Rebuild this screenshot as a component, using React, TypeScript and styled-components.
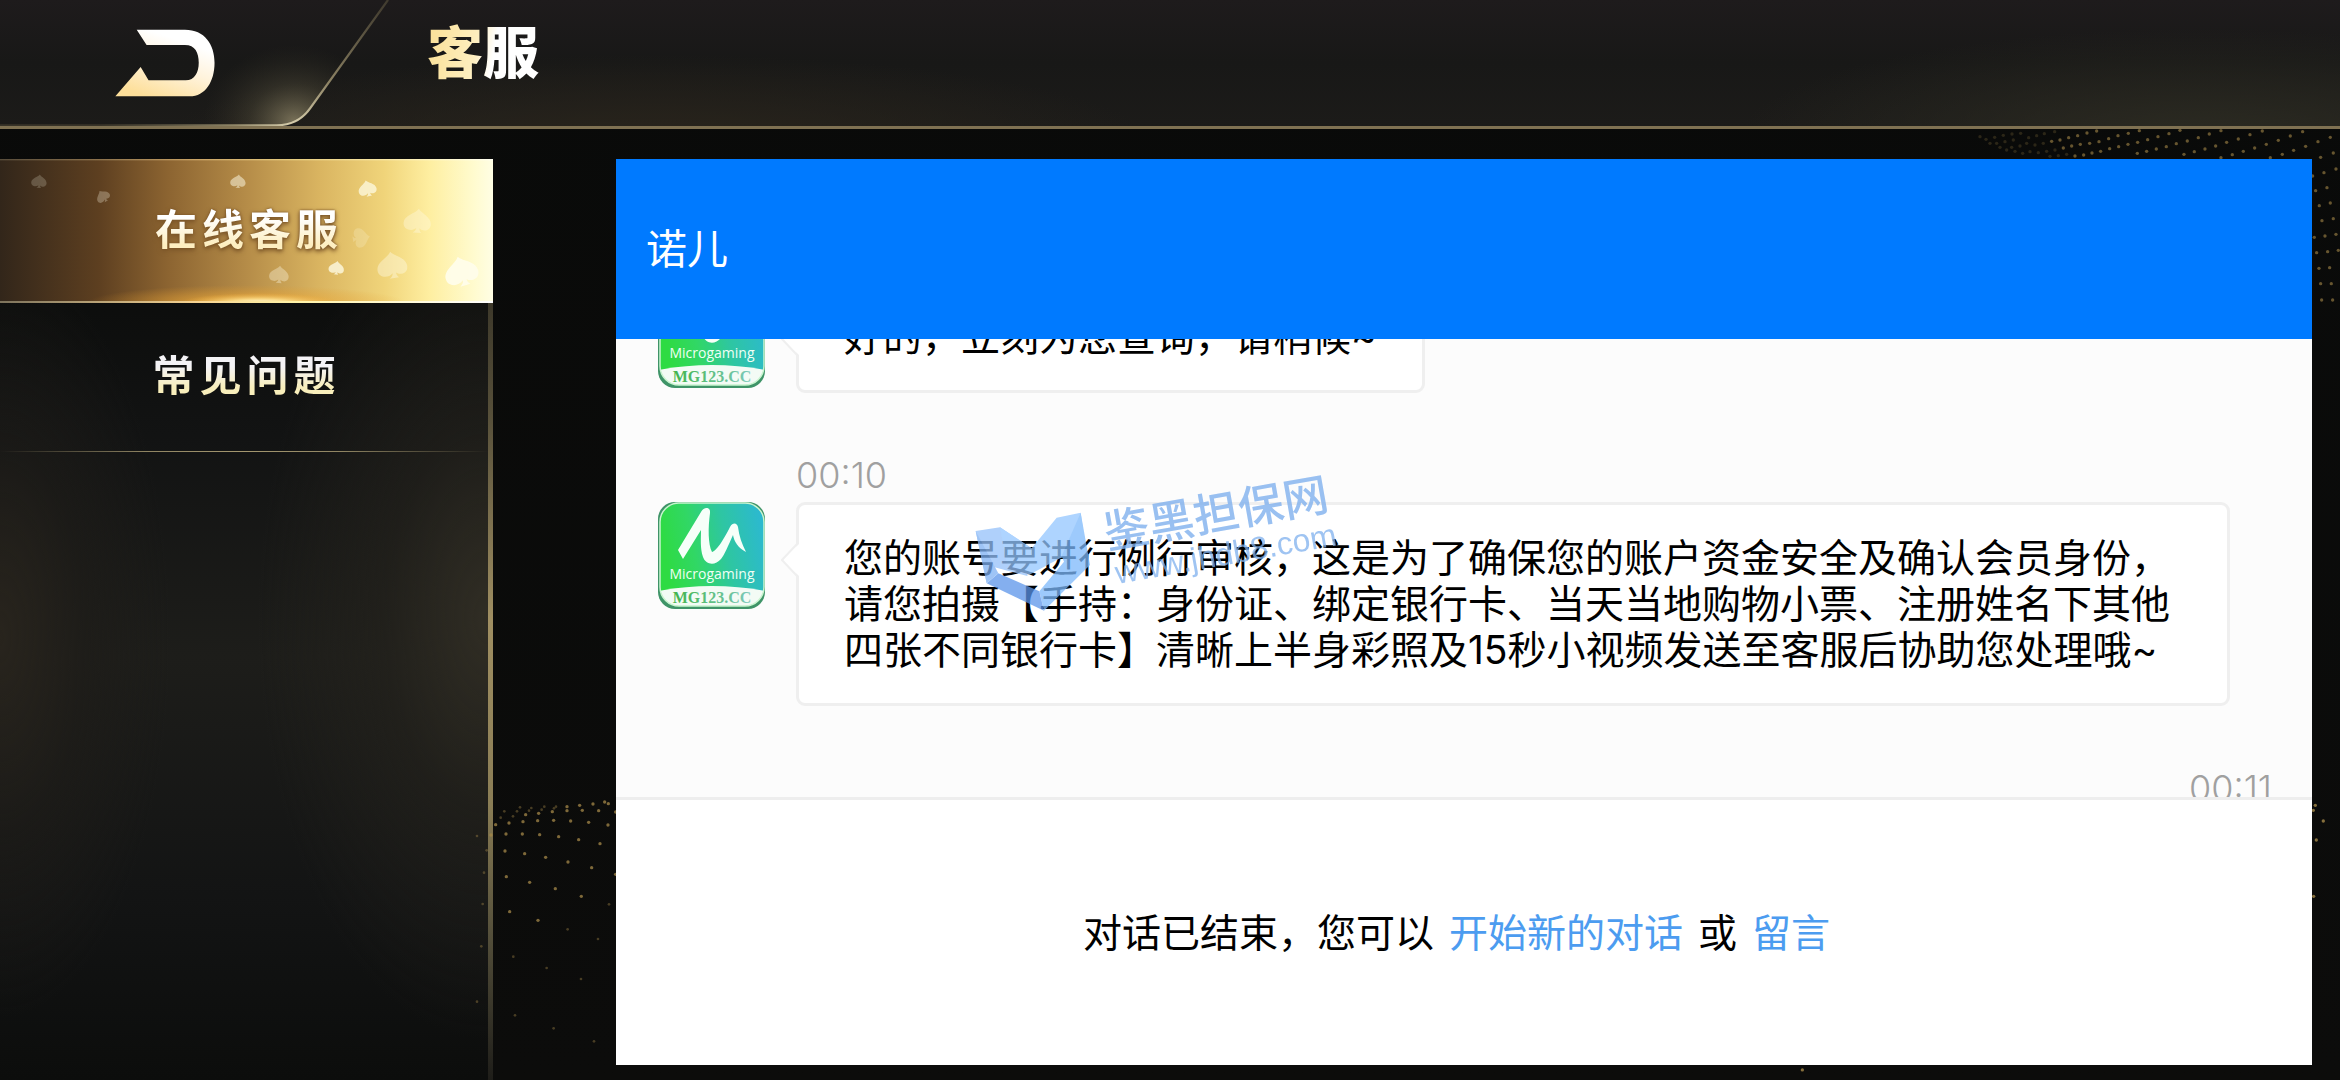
import React, { useLayoutEffect, useRef } from "react";
import styled, { createGlobalStyle } from "styled-components";

const UI_FONT = `Inter, "Noto Sans CJK SC", sans-serif`;
const CJK_FONT = `"Noto Sans CJK SC", sans-serif`;

const GlobalStyle = createGlobalStyle`
  * { box-sizing: border-box; }
  body { margin: 0; background: #0b0c0b; font-family: ${UI_FONT}; }
  button { border: 0; padding: 0; background: none; font: inherit; cursor: pointer; }
  p, h1, h2 { margin: 0; font-weight: 400; }
`;

const Page = styled.div`
  position: relative;
  display: flex;
  flex-direction: column;
  height: 100vh;
  overflow: hidden;
  background: linear-gradient(#090a09, #0c0c0b);
`;

const TopBar = styled.header`
  position: relative;
  z-index: 2;
  display: flex;
  align-items: flex-start;
  border-bottom: 3px solid #7f7152;
  background:
    radial-gradient(ellipse 460px 110px at 94% 110%, #2c2b22, transparent),
    radial-gradient(ellipse 500px 90px at 28% 115%, #2a251c, transparent),
    linear-gradient(#1e1b1c, #181817 50%, #1c1b19);
`;

const BackButton = styled.button`
  display: block;
  line-height: 0;
`;

const Title = styled.h1`
  margin-left: 24px;
  padding-top: 14px;
  font-family: ${CJK_FONT};
  font-size: 56px;
  line-height: 70px;
  font-weight: 900;
  color: transparent;
  background: linear-gradient(100deg, #fbe29c 10%, #fdeebf 45%, #ffffff 60%);
  background-clip: text;
  -webkit-background-clip: text;
`;

const Body = styled.div`
  display: flex;
  flex: 1;
  min-height: 0;
  padding-top: 30px;
`;

const Sidebar = styled.nav`
  display: flex;
  flex-direction: column;
  width: 493px;
  flex: none;
  border-right: 5px solid;
  border-image: linear-gradient(#1c1b16, #57503a 28%, #a08f62 50%, #8a7d55 70%, #55503b 84%, #1e1d19) 1;
  background:
    radial-gradient(ellipse 230px 420px at 100% 50%, #302d24, #25231d99 45%, transparent),
    radial-gradient(ellipse 170px 380px at 0 52%, #28241d, #1f1d1999 50%, transparent),
    linear-gradient(#0c0d0c 14%, #121313 30%, #1d1d1a 54%, #131414 80%, #0c0d0c);
`;

const SideItem = styled.button<{ $active?: boolean }>`
  position: relative;
  height: ${(p) => (p.$active ? "144px" : "149px")};
  padding-bottom: 8px;
  margin-right: ${(p) => (p.$active ? "-5px" : "0")};
  border-bottom: ${(p) => (p.$active ? "0" : "1px solid")};
  border-image: linear-gradient(90deg, transparent, #8f8462 30%, #a4976f 50%, #8f8462 70%, transparent) 1;
  background: ${(p) =>
    p.$active
      ? "linear-gradient(90deg, #32261a, #5d3f20 20%, #8c6431 34%, #b58c48 50%, #dab561 65%, #f0d47a 78%, #feeea0 87%, #fffbce 96%, #fffee4)"
      : "none"};
`;

const SideLabel = styled.span<{ $active?: boolean }>`
  position: relative;
  font-family: ${CJK_FONT};
  font-size: 42px;
  line-height: 60px;
  font-weight: 700;
  letter-spacing: 5px;
  padding-left: 5px;
  color: transparent;
  background: ${(p) =>
    p.$active
      ? "linear-gradient(#ffffff 35%, #fdeec0 80%)"
      : "linear-gradient(#f4f3f6 40%, #f8eebb 75%)"};
  background-clip: text;
  -webkit-background-clip: text;
  filter: ${(p) =>
    p.$active
      ? "drop-shadow(0 0 1px #7b5528) drop-shadow(0 2px 2px #7b5528)"
      : "none"};
`;

const SideArt = styled.svg`
  position: absolute;
  inset: 0;
  width: 100%;
  height: 100%;
`;

const Backdrop = styled.svg`
  position: absolute;
  inset: 0;
  width: 100%;
  height: 100%;
  pointer-events: none;
`;

const Panel = styled.main`
  position: relative;
  z-index: 2;
  display: flex;
  flex-direction: column;
  flex: 1;
  min-width: 0;
  margin: 0 28px 15px 123px;
  background: #fff;
`;

const PanelHeader = styled.h2`
  padding: 60px 30px;
  font-size: 41px;
  line-height: 60px;
  color: #fff;
  background: #007aff;
`;

const Chat = styled.section`
  flex: 1;
  min-height: 0;
  overflow-y: auto;
  scrollbar-width: none;
  padding: 30px 40px 60px 42px;
  background: #fcfcfc;
`;

const Message = styled.article`
  display: grid;
  grid-template-columns: 108px minmax(0, 1fr);
  column-gap: 30px;
  row-gap: 4px;
  padding-right: 42px;
  margin-bottom: 59px;
`;

const Time = styled.time<{ $own?: boolean }>`
  display: block;
  grid-column: 2;
  font-size: 36px;
  line-height: 46px;
  font-weight: 300;
  color: #a0a0a0;
  text-align: ${(p) => (p.$own ? "right" : "left")};
`;

const Bubble = styled.div`
  position: relative;
  justify-self: start;
  padding: 30px 45px;
  border: 3px solid #efefef;
  border-radius: 9px;
  font-size: 39px;
  line-height: 46px;
  color: #000;
  background: #fff;
`;

const Tail = styled.svg`
  position: absolute;
  left: -18px;
  top: 38px;
`;

const Footer = styled.footer`
  padding: 110px 20px 109px;
  border-top: 3px solid #eee;
  font-size: 39px;
  line-height: 46px;
  text-align: center;
  color: #000;
`;

const FooterLink = styled.a`
  margin: 0 15px;
  color: #4c9cf0;
  text-decoration: none;
`;

const Watermark = styled.svg`
  position: absolute;
  left: 354px;
  top: 311px;
  pointer-events: none;
`;

function BackArt() {
  return (
    <svg width="403" height="126" viewBox="0 0 1020 378" preserveAspectRatio="none" aria-hidden="true">
      <defs>
        <linearGradient id="arrow" x1="0.2" y1="1" x2="0.7" y2="0">
          <stop offset="0.05" stopColor="#fddf9a" />
          <stop offset="0.5" stopColor="#fff3dc" />
          <stop offset="0.85" stopColor="#ffffff" />
        </linearGradient>
        <radialGradient id="tabGlow" gradientUnits="userSpaceOnUse" cx="745" cy="365" r="230">
          <stop offset="0" stopColor="#8f8668" stopOpacity="0.8" />
          <stop offset="0.5" stopColor="#5a543f" stopOpacity="0.35" />
          <stop offset="1" stopColor="#3a3528" stopOpacity="0" />
        </radialGradient>
        <radialGradient id="tabLine" gradientUnits="userSpaceOnUse" cx="735" cy="360" r="480">
          <stop offset="0" stopColor="#d8cfae" />
          <stop offset="0.3" stopColor="#8f8566" />
          <stop offset="1" stopColor="#4a4332" stopOpacity="0.6" />
        </radialGradient>
      </defs>
      <path d="M0 0H982L785 325Q755 376 700 376H0Z" fill="url(#tabGlow)" />
      <path d="M0 376H700Q755 376 785 325L982 0" fill="none" stroke="url(#tabLine)" strokeWidth="6" />
      <path
        d="M346 89H468C518 89 543 133 543 188C543 244 520 289 480 289H292L356 201L376 241H470C493 241 503 216 503 188C503 158 494 135 468 135H371Z"
        fill="url(#arrow)"
      />
    </svg>
  );
}

/* x, y, half width, tilt, opacity */
const SPADES: number[][] = [
  [117, 68, 22, 4, 0.2],
  [309, 113, 20, -35, 0.28],
  [714, 68, 22, 4, 0.5],
  [1102, 90, 26, -14, 0.7],
  [1252, 188, 39, 4, 0.35],
  [1082, 236, 28, 80, 0.2],
  [837, 348, 28, 4, 0.35],
  [1009, 328, 22, 6, 0.75],
  [1176, 321, 43, -10, 0.4],
  [1384, 340, 48, -16, 0.95],
];

function ActiveArt() {
  return (
    <SideArt viewBox="0 0 1479 432" preserveAspectRatio="none" aria-hidden="true">
      <defs>
        <radialGradient id="flare">
          <stop offset="0" stopColor="#fffdf0" />
          <stop offset="0.4" stopColor="#ffe596" stopOpacity="0.8" />
          <stop offset="1" stopColor="#f2ad3a" stopOpacity="0" />
        </radialGradient>
        <radialGradient id="warm">
          <stop offset="0" stopColor="#f0b040" stopOpacity="0.9" />
          <stop offset="1" stopColor="#e39b2c" stopOpacity="0" />
        </radialGradient>
        <linearGradient id="edge">
          <stop offset="0" stopColor="#7d735c" />
          <stop offset="0.4" stopColor="#f7d492" />
          <stop offset="0.6" stopColor="#fff3a8" />
          <stop offset="1" stopColor="#ffffff" />
        </linearGradient>
      </defs>
      <ellipse cx="740" cy="432" rx="480" ry="54" fill="url(#warm)" />
      <ellipse cx="780" cy="432" rx="240" ry="30" fill="url(#flare)" />
      <rect y="426" width="1479" height="6" fill="url(#edge)" />
      <rect width="1479" height="4" fill="url(#edge)" opacity="0.5" />
      {SPADES.map(([x, y, r, tilt, opacity]) => (
        <path
          key={`${x}-${y}`}
          transform={`translate(${x} ${y}) rotate(${tilt}) scale(${r / 20})`}
          d="M1 -20C5 -13 21 -9 21 3C21 14 9 15 4 10C4 13 5 15 7 17H-6C-3 15 -1 13 -1 10C-7 16 -21 14 -21 3C-21 -9 -4 -12 1 -20Z"
          fill="#fffdea"
          opacity={opacity}
        />
      ))}
    </SideArt>
  );
}

const DOTS_TOP = [
  [718,122],[743,149],[774,140],[807,131],[840,121],[829,161],[862,153],[895,143],[928,132],[963,122],
  [852,193],[883,185],[915,177],[947,168],[980,157],[1015,147],[1050,134],[1087,123],[963,203],[997,194],
  [1030,184],[1064,174],[1099,163],[1135,151],[1171,138],[1208,125],[1111,203],[1147,193],[1181,181],
  [1217,169],[1254,155],[1291,142],[1262,202],[1300,189],[685,130],[654,137],[626,146],[597,155],[569,160],
  [684,163],[713,157],[656,170],[629,176],[602,184],[576,189],[740,184],[712,190],[769,177],[799,170],
  [590,123],[561,129],[533,137],[506,143],[480,150],[455,154],[541,163],[515,168],[490,174],[551,195],[525,198],
  [1238,258],[1272,248],[1308,237],[1247,302],[1281,293],[1258,347],[1291,339],[1266,392],[1300,386],
  [1243,442],[1275,438],[1308,433],[1250,488],[1283,485],[1315,481],[1257,535],[1289,533],[1262,581],
  [1294,581],[1265,630],[1298,630],
];
const DOTS_FAINT = [
  [464,125],[433,131],[410,137],[386,143],[362,130],[336,132],[310,136],[284,142],[258,148],[340,150],
  [315,155],[290,160],[430,160],[405,165],[380,160],[360,168],[335,172],[465,180],[440,184],[415,188],
  [390,185],[368,190],[345,184],[500,193],[475,197],[450,199],[320,180],[300,172],[240,140],[270,160],
];
const DOTS_LEFT = [
  [167,194],[207,189],[249,185],[293,182],[341,181],[392,183],[446,187],[504,195],[198,222],[247,222],
  [299,224],[356,230],[416,239],[480,251],[195,273],[254,281],[317,292],[384,306],[455,323],[199,350],
  [269,367],[346,386],[424,409],[209,455],[294,481],[257,164],[296,160],[337,155],[381,152],[427,151],
  [476,152],[527,156],[381,140],[419,136],[459,132],[505,131],[494,126],[153,225],[527,343],
];
const DOTS_LEFT_FAINT = [
  [507,433],[383,508],[474,537],[220,590],[320,624],[423,657],[225,766],[341,805],[462,844],[132,338],
  [128,432],[124,559],[111,725],[140,271],[193,154],[182,173],[219,169],[231,154],[240,142],[267,152],
  [274,144],[305,149],[313,140],[342,145],[348,140],[111,228],
];
const DOTS_BOTTOM = [[646,496],[640,511],[670,543],[649,600],[641,769],[-893,1290]];

function Dots({ at, x, y, r, opacity }: { at: number[][]; x: number; y: number; r: number; opacity: number }) {
  return (
    <g transform={`translate(${x} ${y}) scale(0.3333)`} opacity={opacity}>
      {at.map(([cx, cy]) => (
        <circle key={`${cx}-${cy}`} cx={cx} cy={cy} r={r} />
      ))}
    </g>
  );
}

function BackdropArt() {
  return (
    <Backdrop viewBox="0 0 2340 1080" preserveAspectRatio="xMidYMid slice" fill="#a58849" aria-hidden="true">
      <Dots at={DOTS_TOP} x={1900} y={90} r={5} opacity={0.6} />
      <Dots at={DOTS_FAINT} x={1900} y={90} r={5} opacity={0.22} />
      <Dots at={DOTS_LEFT} x={440} y={760} r={5} opacity={0.75} />
      <Dots at={DOTS_LEFT_FAINT} x={440} y={760} r={4} opacity={0.4} />
      <Dots at={DOTS_BOTTOM} x={2100} y={640} r={5} opacity={0.8} />
    </Backdrop>
  );
}

function Avatar({ id }: { id: string }) {
  return (
    <svg width="108" height="108" viewBox="0 0 108 108" role="img" aria-label="Microgaming">
      <defs>
        <linearGradient id={`${id}-fill`} x1="0" y1="0.6" x2="1" y2="0.4">
          <stop offset="0.08" stopColor="#2edb43" />
          <stop offset="0.35" stopColor="#31d765" />
          <stop offset="0.65" stopColor="#2ec6a2" />
          <stop offset="1" stopColor="#2cb9cf" />
        </linearGradient>
        <linearGradient id={`${id}-ink`}>
          <stop offset="0" stopColor="#42b44c" />
          <stop offset="1" stopColor="#7cc9bb" />
        </linearGradient>
        <clipPath id={`${id}-clip`}>
          <rect x="2" y="1" width="104" height="103" rx="19" />
        </clipPath>
      </defs>
      <rect width="107" height="107" rx="17" fill="#3f9468" />
      <g clipPath={`url(#${id}-clip)`}>
        <rect width="108" height="108" fill={`url(#${id}-fill)`} />
        <path d="M0 89Q54 79 108 89V108H0Z" fill="#f3fbf5" />
      </g>
      <rect x="2" y="1" width="104" height="103" rx="19" fill="none" stroke="#c9f5cf" strokeWidth="1.5" />
      <path
        d="M20 48L43 10C46 4 53 5 52 11C50 26 50 42 54 50C59 49 67 35 72 25C75 20 79 21 80 25C81 34 84 42 88 50C80 46 76 39 75 33C70 44 67 52 63 57C57 64 48 63 45 55C42 46 43 37 43 28L25 57Z"
        fill="#f6fff9"
      />
      <text x="54" y="77" textAnchor="middle" fontFamily="Open Sans, sans-serif" fontSize="14" fill="#effff4">
        Microgaming
      </text>
      <text
        x="54"
        y="101"
        textAnchor="middle"
        fontFamily="Liberation Serif, serif"
        fontWeight="700"
        fontSize="16"
        fill={`url(#${id}-ink)`}
      >
        MG123.CC
      </text>
    </svg>
  );
}

function ChatMessage({ id, time, children }: { id: string; time?: string; children: React.ReactNode }) {
  return (
    <Message>
      {time && <Time>{time}</Time>}
      <Avatar id={id} />
      <Bubble>
        <Tail width="18" height="34" viewBox="0 0 18 34" aria-hidden="true">
          <path d="M18 1L1 17L18 33" fill="#fff" />
          <path d="M16 1L1 17L16 33" fill="none" stroke="#efefef" strokeWidth="2" />
        </Tail>
        <p>{children}</p>
      </Bubble>
    </Message>
  );
}

function WatermarkArt() {
  return (
    <Watermark width="370" height="150" viewBox="90 60 1110 450" aria-hidden="true">
      <g opacity="0.75">
        <path d="M107 243L180 232L275 295L262 378L158 350L140 400Z" fill="#94c1fa" />
        <path d="M180 232L275 295L350 203L422 188L438 300L360 325L268 374L200 340Z" fill="#93c6ff" />
        <path d="M422 188L450 345L312 482L298 424L372 335L365 318Z" fill="#7db9fb" />
        <path d="M140 400L175 370L298 424L312 482Z" fill="#5b95ea" />
        <path d="M107 243L175 370L140 400Z" fill="#7eb0f3" />
      </g>
      <text
        transform="translate(502 297) rotate(-10)"
        fontFamily="Noto Sans CJK SC, sans-serif"
        fontWeight="500"
        fontSize="136"
        fill="#7fb0ee"
        fillOpacity="0.8"
      >
        鉴黑担保网
      </text>
      <text
        transform="translate(532 402) rotate(-10)"
        fontFamily="Liberation Sans, sans-serif"
        fontSize="96"
        fill="#7fb0ee"
        fillOpacity="0.75"
      >
        www.jhdb8.com
      </text>
    </Watermark>
  );
}

/* Distance the conversation is scrolled when it opens. */
const INITIAL_SCROLL = 88;

export default function App() {
  const chat = useRef<HTMLElement>(null);

  useLayoutEffect(() => {
    if (chat.current) chat.current.scrollTop = INITIAL_SCROLL;
  }, []);

  return (
    <Page>
      <GlobalStyle />
      <TopBar>
        <BackButton type="button" aria-label="返回">
          <BackArt />
        </BackButton>
        <Title>客服</Title>
      </TopBar>
      <Body>
        <Sidebar>
          <SideItem type="button" $active>
            <ActiveArt />
            <SideLabel $active>在线客服</SideLabel>
          </SideItem>
          <SideItem type="button">
            <SideLabel>常见问题</SideLabel>
          </SideItem>
        </Sidebar>
        <BackdropArt />
        <Panel>
          <PanelHeader>诺儿</PanelHeader>
          <Chat ref={chat}>
            <ChatMessage id="first">好的，立刻为您查询，请稍候~</ChatMessage>
            <ChatMessage id="second" time="00:10">
              您的账号要进行例行审核，这是为了确保您的账户资金安全及确认会员身份，请您拍摄【手持：身份证、绑定银行卡、当天当地购物小票、注册姓名下其他四张不同银行卡】清晰上半身彩照及15秒小视频发送至客服后协助您处理哦~
            </ChatMessage>
            <Time $own>00:11</Time>
          </Chat>
          <Footer>
            对话已结束，您可以
            <FooterLink href="#new">开始新的对话</FooterLink>或<FooterLink href="#message">留言</FooterLink>
          </Footer>
          <WatermarkArt />
        </Panel>
      </Body>
    </Page>
  );
}
